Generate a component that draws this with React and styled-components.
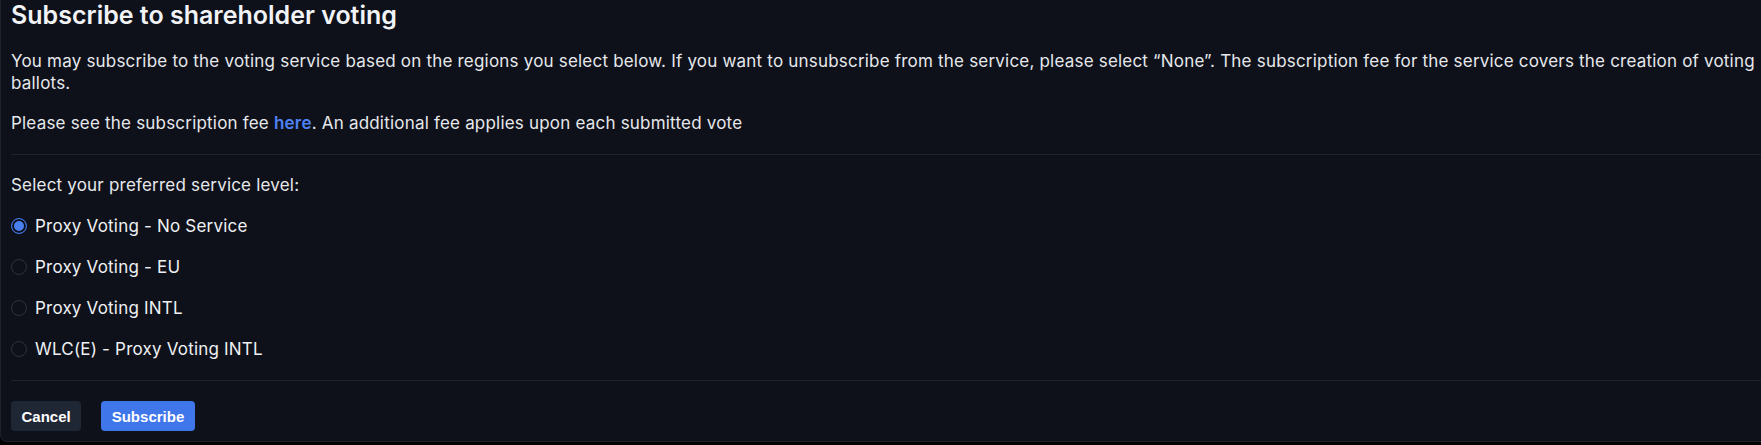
import React, { useState } from "react";
import styled, { createGlobalStyle } from "styled-components";

const GlobalStyle = createGlobalStyle`
  html, body {
    margin: 0;
    padding: 0;
    background: #000000;
    overflow: hidden;
  }
  body {
    font-family: Inter, "Noto Sans", "Liberation Sans", sans-serif;
    color: #e6e8ec;
  }
`;

const Panel = styled.section`
  width: 1792px;
  box-sizing: border-box;
  background: #0e111a;
  border: 1px solid #1d222d;
  border-top: none;
  border-radius: 0 0 7px 7px;
  padding: 0 10px 10px;
  display: flex;
  flex-direction: column;
`;

const Title = styled.h1`
  margin: 0;
  font-size: 25px;
  line-height: 30px;
  font-weight: 600;
  color: #f1f3f6;
`;

const Paragraph = styled.p`
  margin: ${(p) => p.$top || 0}px 0 0;
  font-size: 17px;
  letter-spacing: 0.2px;
  line-height: 22px;
  color: #e6e8ec;
`;

const Link = styled.a`
  color: #4f82f2;
  font-weight: 600;
  text-decoration: none;
  cursor: pointer;
`;

const Divider = styled.hr`
  margin: ${(p) => p.$top}px 0 0;
  border: none;
  border-top: 1px solid #1e2330;
  height: 0;
`;

const Fieldset = styled.fieldset`
  margin: 19px 0 0;
  padding: 0;
  border: none;
  display: flex;
  flex-direction: column;
  gap: 19px;
`;

const Legend = styled.div`
  font-size: 17px;
  letter-spacing: 0.2px;
  line-height: 22px;
  color: #e6e8ec;
`;

const Option = styled.label`
  display: flex;
  align-items: center;
  gap: 8px;
  height: 22px;
  font-size: 17px;
  letter-spacing: 0.2px;
  color: #eef0f3;
  cursor: pointer;
`;

const HiddenInput = styled.input`
  position: absolute;
  opacity: 0;
  width: 0;
  height: 0;
  margin: 0;
`;

const RadioMark = styled.span`
  width: 16px;
  height: 16px;
  box-sizing: border-box;
  border-radius: 50%;
  flex: none;
  border: ${(p) => (p.$checked ? "1.5px solid #3f74e4" : "1px solid #2c3240")};
  background: ${(p) => (p.$checked ? "#4a7ff0" : "transparent")};
  box-shadow: ${(p) => (p.$checked ? "inset 0 0 0 2px #0e111a" : "none")};
`;

const Actions = styled.div`
  margin-top: 20px;
  display: flex;
  gap: 20px;
`;

const Button = styled.button`
  height: 30px;
  padding: 0 10.5px;
  border: none;
  border-radius: 4px;
  font-family: "Liberation Sans", Arial, sans-serif;
  font-weight: 700;
  font-size: 15px;
  color: #ffffff;
  cursor: pointer;
  background: ${(p) => (p.$primary ? "#3f76e9" : "#1f2634")};
`;

const options = [
  "Proxy Voting - No Service",
  "Proxy Voting - EU",
  "Proxy Voting INTL",
  "WLC(E) - Proxy Voting INTL",
];

export default function App() {
  const [selected, setSelected] = useState(0);
  return (
    <>
      <GlobalStyle />
      <Panel>
        <Title>Subscribe to shareholder voting</Title>
        <Paragraph $top={20}>
          You may subscribe to the voting service based on the regions you select below. If you want to
          unsubscribe from the service, please select “None”. The subscription fee for the service covers the
          creation of voting ballots.
        </Paragraph>
        <Paragraph $top={18}>
          Please see the subscription fee <Link>here</Link>. An additional fee applies upon each submitted vote
        </Paragraph>
        <Divider $top={20} />
        <Fieldset>
          <Legend>Select your preferred service level:</Legend>
          {options.map((label, i) => (
            <Option key={label}>
              <HiddenInput
                type="radio"
                name="service"
                checked={selected === i}
                onChange={() => setSelected(i)}
              />
              <RadioMark $checked={selected === i} />
              {label}
            </Option>
          ))}
        </Fieldset>
        <Divider $top={20} />
        <Actions>
          <Button>Cancel</Button>
          <Button $primary>Subscribe</Button>
        </Actions>
      </Panel>
    </>
  );
}
